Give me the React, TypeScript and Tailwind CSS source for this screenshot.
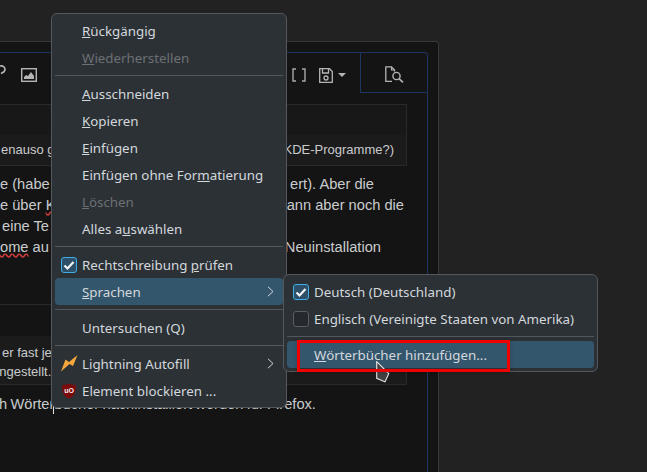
import type { ReactNode } from "react";

function Check() {
  return (
    <span className="w-4 h-4 rounded-[3px] border border-[#3daee9] bg-[#2d5068] flex items-center justify-center">
      <svg width="12" height="12" viewBox="0 0 12 12" fill="none">
        <path d="M1.5 6.5 L4.5 9.5 L10.5 3" stroke="#f2f4f5" strokeWidth="2.2" />
      </svg>
    </span>
  );
}

function Chevron() {
  return (
    <svg width="7" height="11" viewBox="0 0 7 11" fill="none" className="ml-auto mr-[9px]">
      <path d="M1 0.8 L6 5.5 L1 10.2" stroke="#d3d8dc" strokeWidth="1" />
    </svg>
  );
}

function Bolt() {
  return (
    <svg width="17" height="17" viewBox="0 0 17 17">
      <path d="M0 16.5 L4.5 4.5 L8 7 L16.5 0 L12 11 L8.5 9 Z" fill="#f5a73c" />
    </svg>
  );
}

function UBlock() {
  return (
    <svg width="16" height="16" viewBox="0 0 16 16">
      <path d="M8 0.5 C10 1.5 12.5 2 15 2 C15 9 13 13.5 8 15.5 C3 13.5 1 9 1 2 C3.5 2 6 1.5 8 0.5 Z" fill="#7d0a0a" />
      <text x="8" y="9.8" textAnchor="middle" fontSize="7" fontWeight="700" fill="#f8eeee" fontFamily="Liberation Sans, sans-serif">uO</text>
    </svg>
  );
}

function Item({
  icon,
  children,
  arrow,
  active,
  disabled,
}: {
  icon?: ReactNode;
  children: ReactNode;
  arrow?: boolean;
  active?: boolean;
  disabled?: boolean;
}) {
  return (
    <div
      className={
        "h-[27px] flex items-center rounded-[4px] " +
        (active ? "bg-[#34566c] " : "") +
        (disabled ? "text-[#6c7074]" : "text-[#d3d8dc]")
      }
    >
      <span className="w-[27px] shrink-0 pl-[6px] flex items-center">{icon}</span>
      <span className="whitespace-nowrap pt-[2px]">{children}</span>
      {arrow && <Chevron />}
    </div>
  );
}

function Sep() {
  return (
    <div className="h-[9px] flex items-center">
      <div className="h-px w-full bg-[#54585c]" />
    </div>
  );
}

function Row({ left, right, pr }: { left: ReactNode; right: ReactNode; pr: string }) {
  return (
    <div className={"h-[21px] flex justify-between whitespace-nowrap " + pr}>
      <span>{left}</span>
      <span>{right}</span>
    </div>
  );
}

export default function App() {
  return (
    <div className="relative w-[647px] h-[472px] overflow-hidden bg-[#222222] pt-[41px] font-['Liberation_Sans',sans-serif] text-[#c9ccce]">
      {/* page behind the menu */}
      <div className="w-[439px] h-[431px] bg-[#141414] border-t border-r border-[#383838] rounded-tr-[4px] pt-[10px]">
        <div className="w-[428px] h-[420px] border-t border-r border-[#1d3560] rounded-tr-[4px]">
          <div className="flex h-[40px]">
            <div className="w-[360px] flex items-center pt-[4px] text-[#b5b5b5]">
              <svg width="6" height="14" viewBox="0 0 6 14" fill="none" className="mb-[6px]">
                <path d="M0 1 C3 0.5 5 2 5 4.5 C5 7 3 7.5 1 8.5" stroke="#b5b5b5" strokeWidth="1.6" />
              </svg>
              <svg width="16" height="14" viewBox="0 0 16 14" className="ml-[15px]">
                <rect x="0.7" y="0.7" width="14.6" height="12.6" fill="none" stroke="#b5b5b5" strokeWidth="1.4" />
                <path d="M3 11 L3 9 L5 7 L7 8 L10 4 L13 8 L13 11 Z" fill="#b5b5b5" />
              </svg>
              <svg width="14" height="14" viewBox="0 0 14 14" fill="none" className="ml-[255px]">
                <path d="M4 1 H1 V13 H4 M10 1 H13 V13 H10" stroke="#a8a8a8" strokeWidth="1.4" />
              </svg>
              <svg width="14" height="15" viewBox="0 0 14 15" fill="none" className="ml-[13px]">
                <path d="M0.7 0.7 H10.5 L13.3 3.5 V14.3 H0.7 Z" stroke="#b5b5b5" strokeWidth="1.3" />
                <path d="M3.5 0.7 V5 H9.5 V0.7" stroke="#b5b5b5" strokeWidth="1.3" />
                <circle cx="7" cy="10" r="2" stroke="#b5b5b5" strokeWidth="1.3" />
              </svg>
              <svg width="8" height="4" viewBox="0 0 8 4" className="ml-[5px]">
                <path d="M0 0 H8 L4 4 Z" fill="#b5b5b5" />
              </svg>
            </div>
            <div className="w-[67px] border-l border-b border-[#1d3560] flex items-center justify-center pt-[4px]">
              <svg width="19" height="17" viewBox="0 0 19 17" fill="none">
                <path d="M7 15.3 H0.8 V0.8 H6.5 L9.5 4 V5.5" stroke="#b5b5b5" strokeWidth="1.3" />
                <path d="M6.5 0.8 V4 H9.5" stroke="#b5b5b5" strokeWidth="1.1" />
                <circle cx="11.5" cy="10" r="3.6" stroke="#b5b5b5" strokeWidth="1.4" />
                <path d="M14 12.7 L18 16.3" stroke="#b5b5b5" strokeWidth="1.6" />
              </svg>
            </div>
          </div>

          <div className="mt-[11px] w-[407px] h-[62px] border-t border-r border-b border-[#2a2a2a] text-[13px]">
            <div className="h-[30px] bg-[#181818]" />
            <div className="h-[30px] bg-[#1b1b1b] flex items-center justify-between pl-px pr-[12px] whitespace-nowrap">
              <span>enauso g</span>
              <span>(KDE-Programme?)</span>
            </div>
          </div>

          <div className="mt-[8px] text-[14.67px] leading-[21px]">
            <Row pr="pr-[53px]" left="e (habe c" right="ert). Aber die" />
            <Row
              pr="pr-[23px]"
              left={
                <>
                  e über <span className="underline decoration-wavy decoration-[#d33b3b]">K</span>
                </>
              }
              right="ann aber noch die"
            />
            <Row pr="pr-[23px]" left={<span className="pl-[2px]">eine Te</span>} right="" />
            <Row
              pr="pr-[46px]"
              left={
                <>
                  <span className="underline decoration-wavy decoration-[#d33b3b]">ome</span> au
                </>
              }
              right="Neuinstallation"
            />
          </div>

          <div className="mt-[46px] w-[407px] h-[81px] border-t border-r border-b border-[#2a2a2a] text-[13px]">
            <div className="h-[31px]" />
            <div className="h-[48px] bg-[#1b1b1b] leading-[19px] pt-[7px] pl-[2px] whitespace-nowrap">
              <div>er fast jede</div>
              <div className="-ml-[10px]">angestellt.</div>
            </div>
          </div>

          <div className="mt-[9px] -ml-px text-[14.67px] leading-[21px] whitespace-nowrap [word-spacing:-0.8px]">
            h Wörterbücher nachinstalliert werden für Firefox.
          </div>
        </div>
      </div>

      {/* text caret under the menu edge */}
      <div className="absolute left-[53px] top-[405px] w-px h-[9px] bg-[#e8e8e8]" />

      {/* context menu */}
      <div className="absolute left-[51px] top-[13px] w-[236px] h-[395px] px-[3px] pt-[3px] rounded-[6px] border border-[#54585c] bg-[#2c3136] font-['Noto_Sans',sans-serif] text-[13.33px]">
        <Item><u>R</u>ückgängig</Item>
        <Item disabled><u>W</u>iederherstellen</Item>
        <Sep />
        <Item><u>A</u>usschneiden</Item>
        <Item><u>K</u>opieren</Item>
        <Item><u>E</u>infügen</Item>
        <Item>Einfügen ohne For<u>m</u>atierung</Item>
        <Item disabled><u>L</u>öschen</Item>
        <Item>Alles a<u>u</u>swählen</Item>
        <Sep />
        <Item icon={<Check />}>Rechtschreibung <u>p</u>rüfen</Item>
        <Item active arrow><u>S</u>prachen</Item>
        <Sep />
        <Item>Untersuchen (Q)</Item>
        <Sep />
        <Item icon={<Bolt />} arrow>Lightning Autofill</Item>
        <Item icon={<UBlock />}>Element blockieren ...</Item>
      </div>

      {/* languages submenu */}
      <div className="absolute left-[283px] top-[274px] w-[315px] h-[98px] px-[3px] pt-[3px] rounded-[6px] border border-[#54585c] bg-[#2c3136] font-['Noto_Sans',sans-serif] text-[13.33px]">
        <Item icon={<Check />}>Deutsch (Deutschland)</Item>
        <Item
          icon={<span className="block w-4 h-4 rounded-[3px] border border-[#5a5e62] bg-[#25292d]" />}
        >
          Englisch (Vereinigte Staaten von Amerika)
        </Item>
        <Sep />
        <Item active><u>W</u>örterbücher hinzufügen...</Item>
      </div>

      {/* mouse pointer, the red box is drawn across it */}
      <svg width="14" height="22" viewBox="0 0 14 22" className="absolute left-[376px] top-[361px]">
        <path d="M0.7 0.7 L12.8 12.5 L9 20.9 L0.7 17.3 Z" fill="#424242" stroke="#e8e8e8" strokeWidth="1.1" />
      </svg>

      {/* red annotation box */}
      <div className="absolute left-[297px] top-[340px] w-[213px] h-[32px] border-[3px] border-[#f00000] shadow-[0_0_5px_rgba(0,0,0,0.2)]" />
    </div>
  );
}
